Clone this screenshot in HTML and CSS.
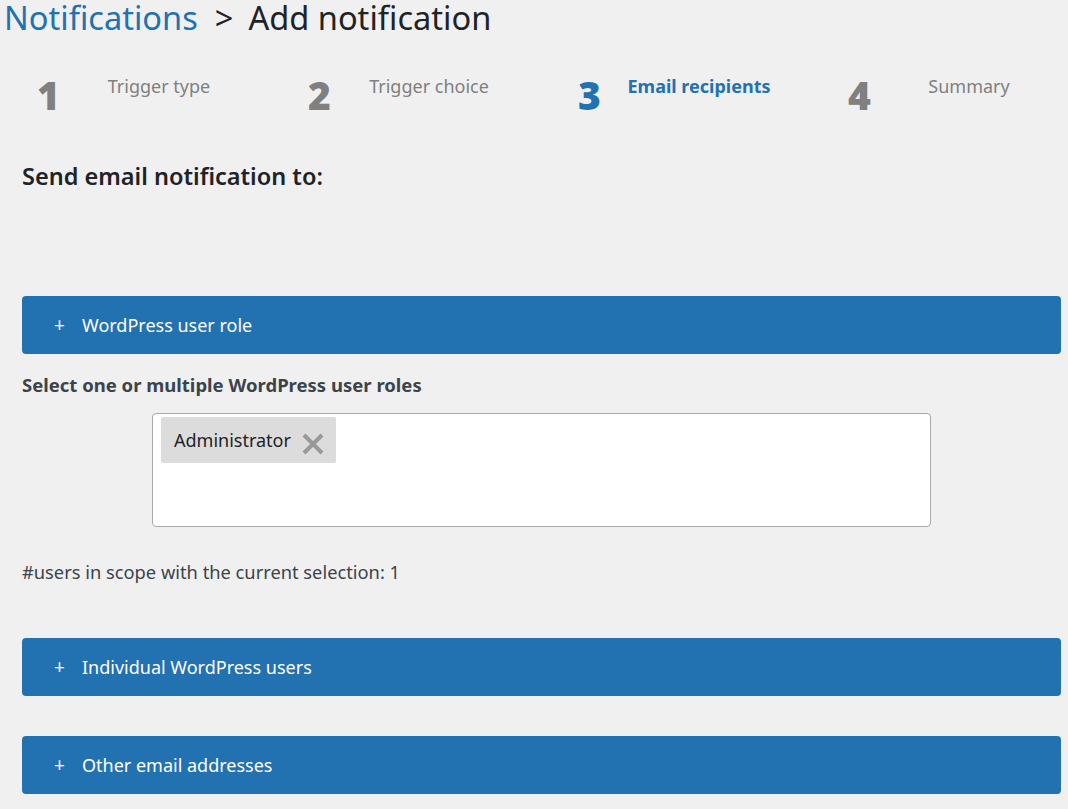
FILE: index.html
```html
<!DOCTYPE html>
<html>
<head>
<meta charset="utf-8">
<link rel="stylesheet" href="styles.css">
</head>
<body>
<div class="page">
  <h1 class="title"><span class="crumb">Notifications</span><span class="sep">&gt;</span><span class="current">Add notification</span></h1>

  <div class="steps">
    <div class="step"><span class="num">1</span><span class="label">Trigger type</span></div>
    <div class="step"><span class="num">2</span><span class="label">Trigger choice</span></div>
    <div class="step active"><span class="num">3</span><span class="label">Email recipients</span></div>
    <div class="step"><span class="num">4</span><span class="label">Summary</span></div>
  </div>

  <div class="content">
    <h2 class="section-title">Send email notification to:</h2>

    <div class="accordion first"><span class="plus">+</span><span class="acc-label">WordPress user role</span></div>

    <p class="field-label">Select one or multiple WordPress user roles</p>

    <div class="select-box">
      <span class="tag">Administrator<span class="tag-x">
        <svg width="22" height="22" viewBox="0 0 22 22"><path d="M2 2 L20 20 M20 2 L2 20" stroke="#999" stroke-width="4" stroke-linecap="butt" fill="none"/></svg>
      </span></span>
    </div>

    <p class="scope">#users in scope with the current selection: 1</p>

    <div class="accordion second"><span class="plus">+</span><span class="acc-label">Individual WordPress users</span></div>
    <div class="accordion third"><span class="plus">+</span><span class="acc-label">Other email addresses</span></div>
  </div>
</div>
</body>
</html>
```

FILE: styles.css
```css
html, body {
  margin: 0;
  padding: 0;
  background: #f0f0f1;
}
body {
  font-family: "Noto Sans", "Open Sans", sans-serif;
  color: #3c434a;
  overflow: hidden;
}
.page {
  width: 1068px;
  height: 809px;
}
.title {
  margin: 0;
  padding: 0 0 0 4px;
  font-size: 32.6px;
  font-weight: 400;
  line-height: 36px;
  height: 34px;
  color: #1d2327;
  white-space: nowrap;
}
.crumb { color: #2271b1; }
.sep { margin: 0 15px 0 17px; }

.steps {
  display: flex;
  padding: 40px 0 0 20px;
  height: 70px;
  box-sizing: border-box;
}
.step {
  flex: 0 0 270px;
  width: 270px;
  display: flex;
  align-items: flex-start;
}
.num {
  width: 54px;
  box-sizing: border-box;
  padding-left: 5px;
  text-align: center;
  font-family: "Open Sans", sans-serif;
  font-weight: 800;
  font-size: 39px;
  line-height: 38px;
  margin-top: 2px;
  color: #808080;
}
.step:first-child .num { padding-left: 3px; }
.label {
  width: 170px;
  text-align: center;
  font-size: 18px;
  line-height: 24px;
  color: #808080;
  margin-top: 0;
}
.step.active .num,
.step.active .label {
  color: #2271b1;
}
.step.active .label { font-weight: 700; }

.content {
  padding: 0 7px 0 22px;
}
.section-title {
  margin: 57px 0 0 0;
  font-size: 23.5px;
  line-height: 30px;
  font-weight: 600;
  color: #1d2327;
}
.accordion {
  height: 58px;
  background: #2271b1;
  border-radius: 4px;
  color: #fff;
  display: flex;
  align-items: center;
  font-size: 18px;
}
.accordion.first { margin-top: 105px; }
.accordion.second { margin-top: 54px; }
.accordion.third { margin-top: 40px; }
.plus {
  width: 27px;
  margin-left: 32px;
  font-size: 19px;
}
.acc-label { margin-left: 1px; }

.field-label {
  margin: 19px 0 0 0;
  font-size: 18.5px;
  line-height: 24px;
  font-weight: 700;
  color: #3c434a;
}
.select-box {
  margin: 16px 0 0 130px;
  width: 779px;
  height: 114px;
  box-sizing: border-box;
  border: 1px solid #aaa;
  border-radius: 4px;
  background: #fff;
  padding: 3px 8px;
}
.tag {
  display: inline-flex;
  align-items: center;
  height: 46px;
  background: #dcdcdc;
  border-radius: 2px;
  padding: 0 12px 0 13px;
  font-size: 18px;
  color: #1d2327;
}
.tag-x {
  display: inline-flex;
  margin-left: 11px;
  margin-top: 8px;
}
.scope {
  margin: 33px 0 0 0;
  font-size: 18.3px;
  line-height: 24px;
  color: #3c434a;
}
```
